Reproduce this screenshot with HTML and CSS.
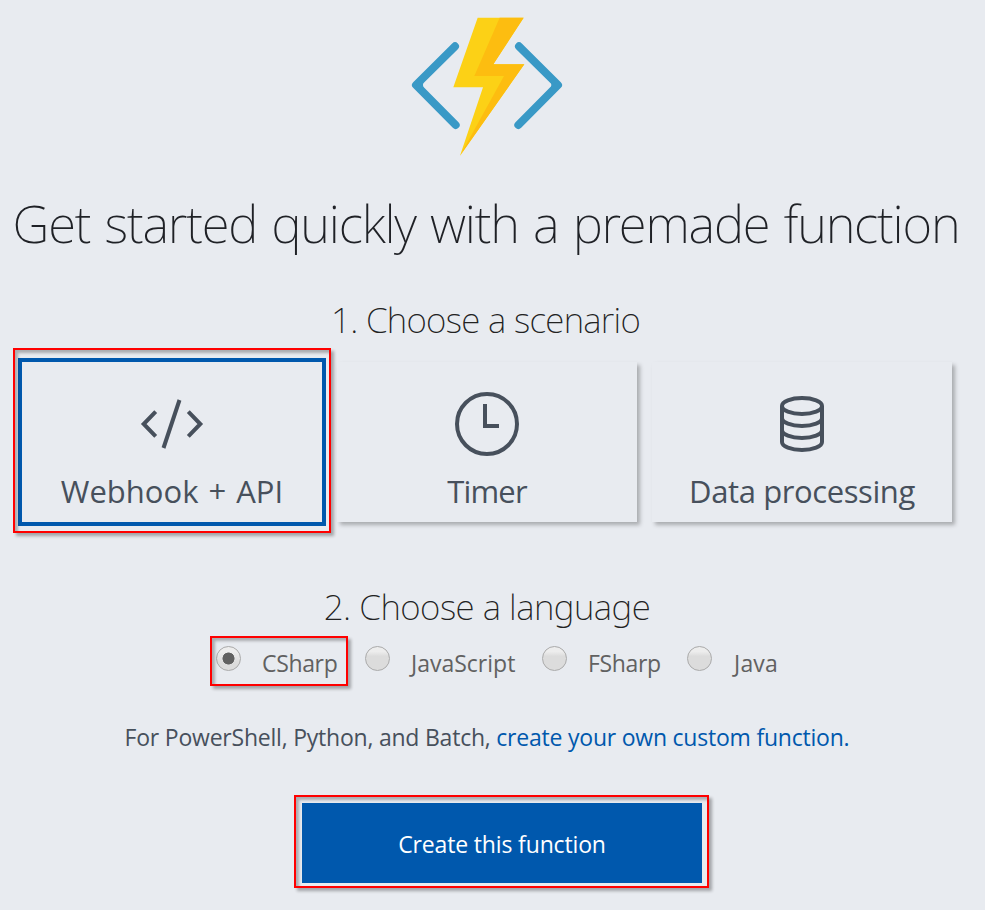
FILE: index.html
```html
<!DOCTYPE html>
<html lang="en">
<head>
<meta charset="utf-8">
<title>Get started</title>
<link rel="stylesheet" href="styles.css">
</head>
<body>
<main class="page">
  <svg class="logo" width="175" height="165" viewBox="0 0 525 495" aria-hidden="true">
    <g fill="none" stroke="#3999c6" stroke-width="24" stroke-linecap="round" stroke-linejoin="round">
      <path d="M165 139 48 255 167 375"/>
      <path d="M357 139 474 255 355 375"/>
    </g>
    <path fill="#3999c6" d="M50 241l22 3q-6 11 0 22l-22 1zM473 241l-22 3q6 11 0 22l22 1z"/>
    <path fill="#fcd116" d="M233 53H371L280 193H373L180 467 249 262H160Z"/>
    <path fill="#fdbd10" d="M299 53H371L280 193H373L180 467 312 228H223Z"/>
  </svg>
  <h1 class="title">Get started quickly with a premade function</h1>

  <h2 class="step step-scenario">1. Choose a scenario</h2>
  <div class="cards">
    <div class="card selected">
      <svg class="icon" width="80" height="70" viewBox="0 0 80 70" fill="none" stroke="#47505c" stroke-width="4">
        <path d="M23.700 22.600 11.700 35l12 12.400M56.300 22.600 68.300 35l-12 12.400M47.500 11 31.500 59"/>
      </svg>
      <span class="label webhook">Webhook + API</span>
    </div>
    <div class="card">
      <svg class="icon" width="80" height="70" viewBox="0 0 80 70" fill="none" stroke="#47505c" stroke-width="4">
        <circle cx="40" cy="35" r="30"/><path d="M38 15v22h14"/>
      </svg>
      <span class="label timer">Timer</span>
    </div>
    <div class="card">
      <svg class="icon" width="80" height="70" viewBox="0 0 80 70" fill="none" stroke="#47505c" stroke-width="4">
        <ellipse cx="40" cy="17" rx="20" ry="8"/>
        <path d="M20 17v36c0 4.400 9 8 20 8s20-3.600 20-8V17M20 29c0 4.400 9 8 20 8s20-3.600 20-8M20 41c0 4.400 9 8 20 8s20-3.600 20-8"/>
      </svg>
      <span class="label data">Data processing</span>
    </div>
  </div>

  <h2 class="step step-language">2. Choose a language</h2>
  <div class="languages">
    <label class="lang marked"><i class="radio on"></i><span>CSharp</span></label>
    <label class="lang js"><i class="radio"></i><span>JavaScript</span></label>
    <label class="lang fs"><i class="radio"></i><span>FSharp</span></label>
    <label class="lang java"><i class="radio"></i><span>Java</span></label>
  </div>

  <p class="note">For PowerShell, Python, and Batch, <a class="link">create your own custom function.</a></p>
  <div class="action"><button class="create">Create this function</button></div>
</main>
</body>
</html>
```
FILE: styles.css
```css
* { box-sizing: border-box; }
body {
  margin: 0;
  background: #e8ebf0;
  color: #47505c;
  font-family: "Open Sans", "Noto Sans", sans-serif;
}
.page {
  width: 974px;
  height: 910px;
  display: flex;
  flex-direction: column;
  align-items: center;
}
.logo { display: block; flex: none; }
.title {
  margin: 18px 0 0;
  height: 80px;
  line-height: 80px;
  padding-right: 2px;
  font-family: "Noto Sans", sans-serif;
  font-size: 51px;
  font-weight: 200;
  letter-spacing: -1.2px;
  word-spacing: 2.2px;
  color: #1f2126;
  white-space: nowrap;
}
.step {
  margin: 0;
  height: 50px;
  line-height: 50px;
  font-family: "Noto Sans", sans-serif;
  font-size: 35px;
  font-weight: 200;
  color: #222;
  white-space: nowrap;
}
.step-scenario { margin-top: 32px; padding-right: 3px; letter-spacing: -.7px; }
.step-language { margin-top: 60px; letter-spacing: -.5px; }

.cards {
  margin-top: 17px;
  display: flex;
  gap: 15px;
}
.card {
  width: 300px;
  height: 160px;
  padding-top: 27px;
  display: flex;
  flex-direction: column;
  align-items: center;
  box-shadow: 3px 3px 4px rgba(0, 0, 0, .27);
}
.card.selected {
  position: relative;
  box-shadow: 0 0 0 4px #0058ad;
}
.selected::before, .marked::before, .action::before {
  content: "";
  position: absolute;
  inset: -14px -9px -11px -9px;
  border: 2px solid #f00;
  box-shadow: 3px 3px 3px rgba(0, 0, 0, .3), inset 3px 3px 3px rgba(0, 0, 0, .27);
}
.icon { display: block; }
.label {
  height: 44px;
  margin-top: 10px;
  line-height: 44px;
  font-size: 31px;
  font-weight: 400;
  white-space: nowrap;
}
.webhook { word-spacing: 2px; }
.timer { letter-spacing: -.8px; }
.data { letter-spacing: -.4px; }

.languages {
  width: 974px;
  height: 50px;
  margin-top: 4px;
  padding-left: 216px;
  display: flex;
}
.lang {
  display: flex;
  width: 149px;
  padding-top: 10px;
  font-size: 23px;
  line-height: 34px;
  color: #616161;
}
.lang span { margin-left: 21px; }
.lang.marked, .lang.fs { letter-spacing: -.35px; }
.lang.js { width: 177px; }
.lang.fs { width: 145px; }
.lang.java { width: 100px; letter-spacing: .2px; }
.lang.java span { margin-left: 22px; }
.marked { position: relative; }
.marked::before { inset: 0 17px 0 -6px; }
.radio {
  flex: none;
  width: 25px;
  height: 25px;
  border: 1px solid #aaa;
  border-radius: 50%;
  background: linear-gradient(#ededed 20%, #dcdcdc 40%);
}
.radio.on { background: radial-gradient(circle, #616161 5.700px, transparent 6.300px), linear-gradient(#ededed 20%, #dcdcdc 70%); }

.note {
  margin: 31px 0 0;
  height: 40px;
  line-height: 40px;
  font-size: 23px;
  letter-spacing: -.22px;
  white-space: nowrap;
}
.link { color: #0058ad; }
.action {
  position: relative;
  width: 400px;
  height: 80px;
  margin: 46px 0 0 30px;
}
.action::before { inset: -8px -7px -5px -8px; }
.create {
  position: relative;
  width: 400px;
  height: 80px;
  border: 0;
  padding: 1px 0 0;
  background: #0058ad;
  color: #fff;
  font: 400 23px "Open Sans", "Noto Sans", sans-serif;
  letter-spacing: -.15px;
}
```
